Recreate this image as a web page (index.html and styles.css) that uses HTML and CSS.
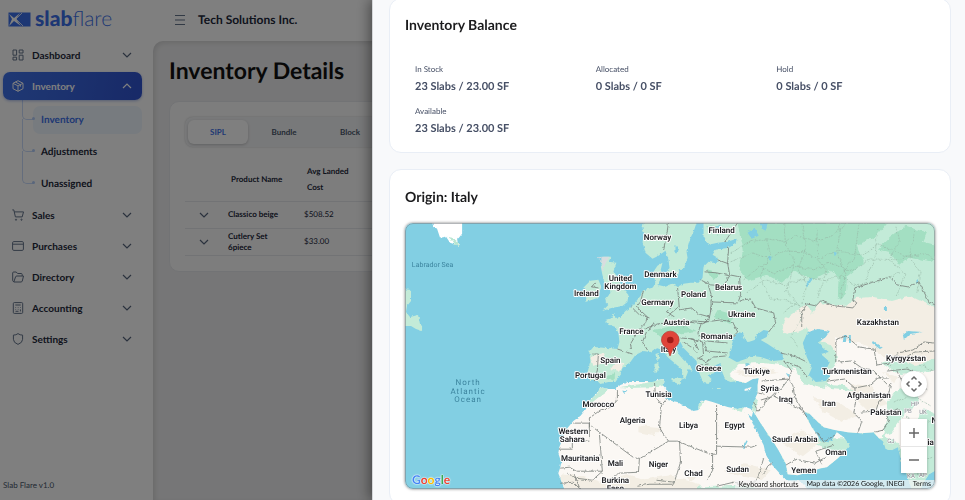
FILE: index.html
```html
<!DOCTYPE html>
<html lang="en">
<head>
<meta charset="utf-8">
<meta name="viewport" content="width=device-width, initial-scale=1">
<title>Slab Flare - Inventory Details</title>
<link rel="stylesheet" href="styles.css">
</head>
<body>
<svg class="defs" aria-hidden="true">
  <symbol id="down" viewBox="0 0 10 10"><path d="M1 3l4 4 4-4"/></symbol>
  <symbol id="up" viewBox="0 0 10 10"><path d="M1 7l4-4 4 4"/></symbol>
</svg>
<div class="app">
  <aside class="sidebar">
    <a class="logo" href="#">
      <svg width="23" height="15" viewBox="0 0 23 15" aria-hidden="true">
        <rect x="0.5" y="0.5" width="22" height="14" fill="#3b6fe8"/>
        <path d="M1 2l5 4 6-5-4 6 5 7-7-5-5 5 3-7z" fill="#fff"/>
        <path d="M8 7L14 1M8 7l7 7" stroke="#fff" stroke-width="0.8"/>
      </svg>
      <span class="wordmark"><b>slab</b>flare</span>
    </a>
    <nav class="nav">
      <button class="item"><svg class="icon" viewBox="0 0 12 12"><path d="M1 1h3.600v5.200H1zM7.200 1h3.800v3H7.200zM1 8.200h3.600V11H1zM7.200 6.200h3.800V11H7.200z"/></svg><span>Dashboard</span><svg class="chev"><use href="#down"/></svg></button>
      <button class="item active"><svg class="icon" viewBox="0 0 12 12"><path d="M6 .7l5 2.600v5.400L6 11.300 1 8.700V3.300zM1 3.300l5 2.600 5-2.600M6 5.900v5.400M3.400 2l5 2.700v2"/></svg><span>Inventory</span><svg class="chev"><use href="#up"/></svg></button>
      <ul class="submenu">
        <li><a class="current" href="#">Inventory</a></li>
        <li><a href="#">Adjustments</a></li>
        <li><a href="#">Unassigned</a></li>
      </ul>
      <button class="item"><svg class="icon" viewBox="0 0 12 12"><path d="M.3.9h1.500l1.600 7h6.800l1.300-5H2.300"/><circle cx="4" cy="10.700" r=".6"/><circle cx="9.500" cy="10.700" r=".6"/></svg><span>Sales</span><svg class="chev"><use href="#down"/></svg></button>
      <button class="item"><svg class="icon" viewBox="0 0 12 12"><rect x=".6" y="1.600" width="10.800" height="8.800" rx="1.200"/><path d="M.6 4.200h10.800"/></svg><span>Purchases</span><svg class="chev"><use href="#down"/></svg></button>
      <button class="item"><svg class="icon" viewBox="0 0 12 12"><path d="M1.800 11L.7 9.700V2q0-1 1-1h2.500l1.400 1.500h3.600q1 0 1 1v1.500M1.800 11l1.700-5q.3-1 1.300-1h6.700l-1.200 5q-.3 1-1.300 1z"/></svg><span>Directory</span><svg class="chev"><use href="#down"/></svg></button>
      <button class="item"><svg class="icon" viewBox="0 0 12 12"><rect x="1.300" y=".6" width="9.400" height="10.800" rx="1"/><path d="M3.300 3h5.400M3.500 5.500h.6M5.800 5.500h.6M8 5.500h.6M3.500 7.400h.6M5.800 7.400h.6M3.500 9.300h3M8.400 7.400v2"/></svg><span>Accounting</span><svg class="chev"><use href="#down"/></svg></button>
      <button class="item"><svg class="icon" viewBox="0 0 12 12"><path d="M6 .6q2 1.600 4.600 1.500v4.200q0 3.400-4.600 5.100-4.600-1.700-4.600-5.100V2.100Q4 2.200 6 .6z"/></svg><span>Settings</span><svg class="chev"><use href="#down"/></svg></button>
    </nav>
    <p class="version">Slab Flare v1.0</p>
  </aside>
  <div class="workspace">
    <header class="topbar">
      <button class="menu" aria-label="Toggle menu"><svg width="12" height="12" viewBox="0 0 12 12"><path d="M1 1.500h10M1 6h10M1 10.500h10"/></svg></button>
      <strong>Tech Solutions Inc.</strong>
    </header>
    <main class="page">
      <h1>Inventory Details</h1>
      <section class="panel">
        <div class="tabs"><button class="selected">SIPL</button><button>Bundle</button><button>Block</button></div>
        <table>
          <thead><tr><th class="toggle"></th><th class="name">Product Name</th><th>Avg Landed<br>Cost</th></tr></thead>
          <tbody>
            <tr><td class="toggle"><button aria-label="Expand"><svg class="chev"><use href="#down"/></svg></button></td><td class="name">Classico beige</td><td>$508.52</td></tr>
            <tr><td class="toggle"><button aria-label="Expand"><svg class="chev"><use href="#down"/></svg></button></td><td class="name">Cutlery Set<br>6piece</td><td>$33.00</td></tr>
          </tbody>
        </table>
      </section>
    </main>
  </div>
</div>
<div class="backdrop"></div>
<aside class="drawer">
  <section class="card">
    <h2>Inventory Balance</h2>
    <dl class="stats">
      <div><dt>In Stock</dt><dd>23 Slabs / 23.00 SF</dd></div>
      <div><dt>Allocated</dt><dd>0 Slabs / 0 SF</dd></div>
      <div><dt>Hold</dt><dd>0 Slabs / 0 SF</dd></div>
      <div><dt>Available</dt><dd>23 Slabs / 23.00 SF</dd></div>
    </dl>
  </section>
  <section class="card origin">
    <h2>Origin: Italy</h2>
    <div class="map">
      <svg class="world" viewBox="405 223 529 266" preserveAspectRatio="xMidYMid slice" role="img" aria-label="Map centred on Italy">
        <defs>
          <path id="eurasia" d="M703 220V238L708 245 717 243 727 242 736 239 735 244 728 248 715 250 712 255 717 258 717 263 712 263 708 262 703 267 702 278 698 283 690 283 683 284 677 287 672 284 665 287 657 285 662 276 660 271 662 263 657 266 653 272 655 284 652 288 643 290 640 296 635 302 631 307 625 311 620 317 615 318 614 314 611 318 605 320 607 324 615 327 618 333 619 342 617 349 607 348 593 347 589 352 590 362 587 373 590 381 597 381 600 384 608 382 615 382 620 375 622 368 630 362 635 355 643 351 650 352 656 348 662 350 667 357 674 363 680 368 683 376 680 380 685 378 687 373 688 369 692 371 690 366 683 360 678 354 675 347 680 342 683 348 690 355 696 361 697 369 700 376 703 383 708 384 711 379 707 375 714 373 711 367 720 363 722 373 725 380 730 382 737 381 745 383 752 379 758 378 757 385 757 393 753 402 751 409 755 415 760 423 766 432 773 442 779 452 785 463 787 474 797 475 811 471 820 468 826 467 837 458 843 452 849 445 843 437 836 432 833 437 828 442 820 441 816 434 811 427 806 418 803 412 808 413 813 418 823 427 835 430 847 432 860 433 873 432 878 438 882 441 885 449 891 450 897 447 900 460 905 473 909 484 912 493 919 491 922 483 928 474 940 467V220z"/>
          <path id="africa" d="M600 387L597 393 590 400 585 410 580 416 573 421 567 428 563 437 559 447 558 453 561 462 560 467 558 473 560 478 562 483 566 495H812L800 481 787 481 778 472 770 463 765 454 763 445 758 435 753 425 747 414 751 417 753 410 745 407 737 409 727 407 718 404 712 402 705 400 698 404 698 410 693 411 685 407 677 402 667 400 663 395 666 389 662 385 664 382 663 379 657 380 652 382 640 382 628 382 620 385 615 389 608 389z"/>
          <path id="nordic" d="M644 220L642 228 644 235 642 242 645 253 652 259 658 256 665 251 668 260 669 268 667 273 670 278 677 276 679 271 684 267 687 258 686 252 688 245 690 238 693 232 697 220z"/>
          <clipPath id="land"><use href="#eurasia"/></clipPath>
          <clipPath id="afclip"><use href="#africa"/></clipPath>
          <filter id="rough" x="0" y="0" width="100%" height="100%"><feTurbulence type="fractalNoise" baseFrequency=".16" numOctaves="2" seed="4"/><feDisplacementMap in="SourceGraphic" scale="5" xChannelSelector="R" yChannelSelector="G"/></filter>
          <filter id="coast"><feTurbulence type="fractalNoise" baseFrequency=".3" numOctaves="2" seed="8"/><feDisplacementMap in="SourceGraphic" scale="3" xChannelSelector="R" yChannelSelector="G"/></filter>
        </defs>
        <rect class="sea" x="405" y="223" width="529" height="266"/>
        <g filter="url(#coast)">
          <use class="green" href="#eurasia"/>
          <use class="sand" href="#africa"/>
          <use class="green" href="#nordic"/>
          <path class="green" d="M603 257L611 257 608 262 616 263 613 272 618 278 622 288 628 295 627 302 622 306 611 308 602 311 608 305 604 301 610 293 609 285 604 282 602 275 600 265zM590 281L598 280 601 287 597 298 585 302 587 295 584 287zM402 289L411 290 411 301 407 306 406 312 410 317 418 315 420 324 422 326 422 331 416 329 411 326 402 326zM655 354l3-1 1 6-3 1zM654 364l4-1v9l-4 1zM671 379l10-1-1 7-9-4zM712 388h8v1h-8z"/>
          <path fill="#fff" d="M431 219L433 226 437 229 440 238 446 237 450 243 459 246 458 239 462 234 462 219z"/>
          <path fill="#b9e6d2" d="M447 237l5 3 3 5 4 1-1-4-6-4z"/>
          <path class="sand" d="M744 389l7-2-2 3-5 1z"/>
          <path fill="#d8dddf" d="M601 257h8l-4 7-3 8-1-9zM597 258l3-1-1 3z"/>
        </g>
        <g clip-path="url(#land)">
          <g filter="url(#rough)">
            <path class="dark" d="M737 223h150l-12 14-18 8 6 18-21 17-12-9-17 9-20-8-12 11-15-8-19 6-8-10 3-20z"/>
            <path class="dark" d="M890 237l15-11 21 7-4 9 16 4-7 16-22-5-11 9-9-14-12-2zM838 271l8 7-1 17-8 4zM705 225l17 2-5 8zM717 310l17 5-4 8-17-6zM706 270l13 4-7 6zM652 330l31-6 13 7-20 3-10 8zM605 377l10-4-1 8z"/>
            <path class="beige" d="M803 323l16-20 26 3 10-8 18-1 18 4 18-5 30 14v50l-26 8-21 8-30-17-17 6-16-21-18-7z"/>
            <path class="sand" d="M728 375l10-11 22-1 18 1 17 4 7 15 22 5 12-28-2-23 34 9 18 13 16-2 8 12 20-3 18 16v37l-25-10-14 20 9 18-14 5-11-14H800l53 23-43 40h-30l-34-76 12-24z"/>
            <path class="beige" d="M785 319l20-14 6 7-8 18-18 5-4-8zM812 397l27 6 18 12-16 7-18-10zM850 384l20 2 16 18-20 7-15-15zM778 440l24-10 18 12-18 14zM590 357l13-4 4 8-14 6zM615 363l8 1-4 8-9-3zM733 372l28-6 16 6-29 5zM882 372l15 5-3 7z"/>
            <path class="green" d="M885 403l9-12 11-3 8-20 5 35-13 9-14 20-7 3 7 12-5 4-4-15 4-16zM903 430l20-8 12 6v48l-15 12-13-16zM809 377l19 7 16 1 9 6-23-2zM880 363l19-5 16 8 20-8v12l-35 5zM758 362l21 3 14 5-6-18-14-5zM785 339l16 9 6 14-19-7zM751 404l5-3-1 13z"/>
          </g>
        </g>
        <g clip-path="url(#afclip)"><g filter="url(#rough)">
          <path class="green" d="M599 386l9 4-12 9-14 12 8-12zM619 387l22-3 22-5 5 5-11 3-27 1zM557 479l22 2 22 2 28-3 21 5 28-2 26 4 43-2 20 8v10H557zM692 407l7-8 5 4-6 7zM731 409l14-4-3 8z"/>
          <path class="beige" d="M561 474l22 2 18 6 25-8 18 5 25-4 30 9-5 7H557zM638 425l24 2-8 8-16-3zM722 472l22-9 26 7-9 10zM683 472l16 2-8 7z"/>
        </g></g>
        <g class="sea" filter="url(#coast)">
          <path d="M729 352L732 342 733 337 738 332 744 334 742 338 748 342 754 340 757 334 763 330 768 331 766 337 760 340 767 344 776 350 782 354 782 360 772 361 760 357 752 356 745 359 736 362 729 358z"/>
          <path d="M802 343L807 332 817 329 829 331 825 337 818 342 823 348 828 352 820 354 829 362 826 368 829 376 825 381 815 382 808 375 811 368 806 357z"/>
          <path d="M902 335l5-4 15 1-13 2-6 6zM843 335h3l-1 7h-3zM848 335h2v8h-2zM872 341l9 7-2 1-8-6zM883 307h3v3h-3zM715 228l4-3 3 3-4 2zM747 233l7-5 4 8-7 3zM759 223h8l-2 8-4-2zM768 256l3 1-1 4-3-2zM833 252l3 1-2 5zM805 285l5-7 2 1-6 9zM914 281l4-2-2 5zM675 245l3 5-3 5zM785 373l5 2-3 1zM622 391l5-1-3 4zM742 447l4-7 1 1-4 8zM884 355h5l-3 2zM745 363l5 1-5 2z"/>
        </g>
        <g class="regions" filter="url(#rough)">
          <path d="M730 253l20-11 16-3 20 3 8-7 19 7 18-6 15-13M730 262l22-9 16 6 15-8 20 1 13 8 19-9 26 4 16-10 30 12 18-3 19 12M743 280l16-13 15 7 17-8 22 4 16-7 22 8 20-12 26 1 14-6M746 293l19-13 19 5 23-7 19 3 13-5 16 10 23-5 20-8M766 239l4 16-11 20 10 24M784 224l2 22 8 17-8 28 11 13M801 223l4 26-8 21 9 13-4 22M816 229l1 31 9 11-10 26M839 223l-2 32 8 19-6 25M858 225l-4 31-16 22M877 229l-3 28-9 23M895 226l4 16-11 18 17 14-10 22M914 231l-6 26 11 15-2 22M770 299l18 2 16 8M783 312l14-9 4 16-11 18 8 10M893 403l17-9 20 12M905 417l15 7 14-6M906 440l24 5M912 463l20-6M918 365l16 6M912 425l4 52"/>
        </g>
        <g class="borders" filter="url(#coast)">
          <path d="M737 223l-10 15-3 4M668 223l-2 13-3 14M728 248l-1 15 2 12 10 2 1 18-2 6M717 260l11 4M704 272l12 1 13 3M700 280l10 5 13 1 6-10M708 286l3 10-1 16M677 287l2 23M710 302l27 1 5-3 8-1 5 9 18 5 2 10-7 9M712 303l-4 18-5 2M679 310l12-2 7 6 11 3-6 7-16-2M667 316l11-9M643 291l-3 11-4 5 11 10-2 6-6 6-9 15 1 5M631 307l7 7 11 4M644 329l13-5 16-2 12 2M646 332l-4 10 5 8M654 322l-6 9M683 327l9-6 14 1 14-2 12 2 5 10-4 4M701 323l-4 11 8 7 22 2M680 338l13 1 5 11M690 339l12 3 1 13-6 4M683 342l9 6 5 5M704 342l2 9 21 2M697 358l9 4 7-5 12-1M700 365l8-1M617 349l15 5M593 354h5l-1 16-3 11M595 283l-4 4 7 1M672 305l-6 7 8 5"/>
          <path d="M801 327v-14l5-9 9 2 5-5 14 5 18 2 4-5-4-3 2-12 19-6 16-5 7 8 11 2 11-5 10 20 6 3M835 362v-22l10-4 13 11 15 2 3 16 13-2 7-10 16-3 11-8 10 1M837 362l14-1 10 7 11 2 15 15M890 366l4-10 11 1 9-5 20-1M886 371l20-2 12 5-1 8M780 353l16 4 10 5M783 361l16 6 8 11M783 361l8 10-3 8M761 381l14-1 13-1 4 6 2 12 12 20M788 379l-7 9-8 8 12 6 13 6 6 4M760 400l10-3 9-9M753 402l4 9 6-5 3 -8M757 393l6 1M816 432l7 10 11-7M763 474l4-8 5-4M785 465l10-6 19 4 11-6M821 464l-6-13 18-6M826 381l18-2 10 9 1 12-2 13 8 8-4 12M854 388l15-3 8-7 11 0M860 412l15-1 3-10 9-5 3-13M896 371l6 12 9 5M874 432l8-2 6-8-3-9 14-5M914 373l12 17"/>
          <path d="M617 390v10l-6 7-11 3-11 8v9M573 423h16v14M558 449h14v-8h17M591 426l43 32h5M599 433l3 38h-26l-7-4-9 1M654 382l1 14 6 9-2 23 9 13-28 17M661 405l5-6M716 405v41l35 1 5-2M716 446v8h-4v16l-5 10M668 441l9 0 35 14M679 441l1 21-3 10-4 12M639 458l-1 14-20 1-10 9M673 484l-24 0-12 2M602 471l-10 9-16-2-9-5M763 458l-6 20-11 10M560 483l13-1 7 7M716 486l17-4 18 3M656 480l18 2M574 474l5 13"/>
        </g>
        <g class="water">
          <text x="432.500" y="267">Labrador Sea</text>
          <g class="ocean"><text x="468" y="385">North</text><text x="468" y="393.500">Atlantic</text><text x="468" y="402">Ocean</text></g>
        </g>
        <g class="states"><text x="914" y="406">HP</text><text x="907" y="413">PB</text><text x="922" y="414">UK</text><text x="890" y="443">GJ</text><text x="910" y="478">KA</text><text x="922" y="477">AP</text></g>
        <g class="countries">
          <text x="657" y="240">Norway</text><text x="721" y="233">Finland</text><text x="620" y="281">United</text><text x="620" y="289">Kingdom</text><text x="586" y="296">Ireland</text><text x="660" y="277">Denmark</text><text x="657" y="305">Germany</text><text x="693" y="297">Poland</text><text x="728" y="290">Belarus</text><text x="741" y="317">Ukraine</text><text x="676" y="325">Austria</text><text x="631" y="334">France</text><text x="716" y="339">Romania</text><text x="877" y="325">Kazakhstan</text><text x="610" y="363">Spain</text><text x="590" y="378">Portugal</text><text x="668" y="352">Italy</text><text x="708" y="371">Greece</text><text x="756" y="374">Türkiye</text><text x="769" y="391">Syria</text><text x="785" y="402">Iraq</text><text x="658" y="397">Tunisia</text><text x="598" y="407">Morocco</text><text x="632" y="423">Algeria</text><text x="688" y="428">Libya</text><text x="734" y="428">Egypt</text><text x="573" y="434">Western</text><text x="572" y="442">Sahara</text><text x="580" y="461">Mauritania</text><text x="615" y="466">Mali</text><text x="658" y="467">Niger</text><text x="615" y="483">Burkina</text><text x="615" y="491">Faso</text><text x="693" y="476">Chad</text><text x="737" y="472">Sudan</text><text x="794" y="442">Saudi Arabia</text><text x="803" y="473">Yemen</text><text x="835" y="455">Oman</text><text x="828" y="406">Iran</text><text x="868" y="398">Afghanistan</text><text x="885" y="415">Pakistan</text><text x="846" y="374">Turkmenistan</text><text x="905" y="361">Kyrgyzstan</text><text x="941" y="423">Nepal</text><text x="924" y="445">India</text>
        </g>
        <g><path d="M669.500 356L667 348.500Q661 345 661 340a8.800 8.800 0 0117.600 0q0 5-6 8.500z" fill="#e0453a" stroke="#b83a30" stroke-width=".7"/><circle cx="669.800" cy="340" r="3.300" fill="#a11a16"/></g>
      </svg>
      <div class="google" aria-label="Google"><span>G</span><span>o</span><span>o</span><span>g</span><span>l</span><span>e</span></div>
      <div class="controls">
        <button class="pan" aria-label="Map camera controls"><svg width="18" height="18" viewBox="0 0 18 18"><path d="M6.500 4.500L9 2l2.500 2.500M6.500 13.500L9 16l2.500-2.500M4.500 6.500L2 9l2.500 2.500M13.500 6.500L16 9l-2.500 2.500"/></svg></button>
        <div class="zoom"><button aria-label="Zoom in"><svg width="12" height="12" viewBox="0 0 12 12"><path d="M1 6h10M6 1v10"/></svg></button><button aria-label="Zoom out"><svg width="12" height="12" viewBox="0 0 12 12"><path d="M1 6h10"/></svg></button></div>
      </div>
      <div class="legal"><button>Keyboard shortcuts</button><span>Map data ©2026 Google, INEGI</span><a href="#">Terms</a></div>
    </div>
  </section>
</aside>
</body>
</html>
```
FILE: styles.css
```css
* { box-sizing: border-box; }
body {
  margin: 0;
  height: 100vh;
  overflow: hidden;
  background: #fff;
  color: #1e293b;
  font-family: Lato, "Liberation Sans", sans-serif;
  font-size: 12px;
  text-rendering: geometricPrecision;
}
button { border: 0; padding: 0; background: none; color: inherit; font: inherit; }
a { color: inherit; text-decoration: none; }
h1, h2, p, ul, dl, dd { margin: 0; padding: 0; }
svg { display: block; flex: none; }
.defs { position: absolute; width: 0; height: 0; }

.app { display: flex; height: 100vh; isolation: isolate; }
.sidebar { display: flex; flex-direction: column; width: 153px; padding: 0 11px 0 3px; }
.logo { display: flex; align-items: center; gap: 4px; height: 38px; padding-left: 5px; color: #3b6fe8; }
.wordmark { font-size: 21px; line-height: 24px; font-weight: 300; }
.wordmark b { font-weight: 900; }
.nav { display: flex; flex-direction: column; gap: 3px; margin-top: 3px; font-size: 10px; }
.item { display: flex; align-items: center; gap: 8px; height: 28px; padding: 0 10px 0 9px; border-radius: 7px; font-weight: 700; text-align: left; }
.item span { flex: 1; }
.icon { width: 12px; height: 12px; fill: none; stroke: #64748b; stroke-width: 1; }
.chev { width: 10px; height: 10px; fill: none; stroke: #56657c; stroke-width: 1.2; }
.item.active { position: relative; z-index: 1; background: linear-gradient(100deg, #3f72e8, #3053cf); color: #fff; box-shadow: 0 1px 3px #3159c966; }
.item.active svg { stroke: #fff; }
.submenu { display: flex; flex-direction: column; gap: 4px; padding: 3px 0 0 30px; list-style: none; }
.submenu li { position: relative; }
.submenu a { display: block; padding: 0 8px; border-radius: 7px; line-height: 28px; font-weight: 700; }
.submenu .current { background: #eff6ff; color: #3f72e8; }
.submenu li::before { content: ""; position: absolute; left: -11px; top: -19px; width: 11px; height: 32px; border: solid #c8dafa; border-width: 0 0 1px 1px; border-bottom-left-radius: 5px; }
.submenu li::after { content: ""; position: absolute; left: -1px; top: 11px; width: 3px; height: 3px; border-radius: 50%; background: #b3cdf8; }
.version { margin-top: auto; padding-bottom: 7px; color: #475569; font-size: 8px; line-height: 16px; }

.workspace { display: flex; flex: 1; flex-direction: column; min-width: 0; }
.topbar { display: flex; align-items: center; gap: 12px; height: 39px; padding: 0 21px; font-size: 12px; }
.menu svg { fill: none; stroke: #64748b; stroke-width: 1.2; }
.page { flex: 1; margin-top: 2px; padding: 13px 16px; border-top-left-radius: 10px; background: #ededee; box-shadow: inset 2px 2px 5px #0000001c; }
h1 { color: #111; font-size: 23px; line-height: 32px; }
.panel { margin-top: 15px; padding: 15px; border: 1px solid #e5e7eb; border-radius: 10px; background: #fafafa; }
.tabs { display: flex; gap: 6px; padding: 3px; border-radius: 8px; background: #f1f2f4; box-shadow: 0 0 2px #0003; }
.tabs button { width: 60px; height: 24px; border-radius: 6px; color: #475569; font-size: 8px; font-weight: 700; }
.tabs .selected { background: #fff; color: #3f72e8; box-shadow: 0 1px 3px #0003; }
table { width: 100%; margin-top: 8px; border-collapse: collapse; font-size: 8px; }
th, td { border-bottom: 1px solid #e5e7eb; text-align: left; }
th { height: 46px; padding: 2px 9px 0; line-height: 16px; }
td { height: 27px; padding: 2px 6px; line-height: 11px; }
td.name { font-weight: 700; }
.toggle { width: 37px; }
.name { width: 76px; white-space: nowrap; }
.toggle button { display: block; margin-left: 8px; }

.backdrop { position: fixed; inset: 0; background: #00000080; }
.drawer { position: fixed; inset: 0 0 0 372px; overflow: hidden; padding: 0 14px 0 16px; border-left: 1px solid #d5d7da; background: #f8f9fb; box-shadow: -3px 0 12px #0006; }
.card { margin-top: -2px; padding: 14px 15px 13px; border: 1px solid #e9eef6; border-radius: 12px; background: #fff; }
.card.origin { margin-top: 16px; padding: 15px; }
h2 { color: #1c1c1e; font-size: 14px; line-height: 24px; }
.stats { display: grid; grid-template-columns: repeat(3, 1fr); gap: 7px 32px; padding: 25px 10px 0; color: #475066; }
dt { font-size: 8px; line-height: 14px; }
dd { margin-top: 1px; font-size: 11px; line-height: 20px; font-weight: 700; }

.map { position: relative; height: 266px; margin-top: 14px; overflow: hidden; border-radius: 8px; box-shadow: 0 0 3px #0008; }
.world { width: 100%; height: 100%; }
.map::after { content: ""; position: absolute; inset: 0; border: 1px solid #80868b99; border-radius: 8px; pointer-events: none; }
.sea { fill: #82cfe3; }
.green { fill: #c3ebd8; }
.dark { fill: #a3dfc2; }
.beige { fill: #f3eee4; }
.sand { fill: #fbf8f4; }
.borders { fill: none; stroke: #777d79; stroke-width: 0.8; }
.regions { fill: none; stroke: #95b5a5; stroke-width: 0.6; stroke-dasharray: 2 1; }
.world text { font-family: Roboto, sans-serif; text-anchor: middle; }
.countries { fill: #202124; stroke: #fff; stroke-width: 2px; stroke-linejoin: round; paint-order: stroke; font-size: 8px; font-weight: 600; }
.water { fill: #3c849e; font-size: 7px; }
.ocean { font-size: 8px; letter-spacing: 1px; }
.states { fill: #80868b; stroke: #fff; stroke-width: 1px; paint-order: stroke; font-size: 6px; }
.google { position: absolute; left: 7px; bottom: 1px; font-size: 12px; line-height: 16px; font-weight: 700; text-shadow: 0 0 1px #fff, 0 0 1px #fff, 0 0 2px #fff; color: #4285f4; }
.google span:nth-child(2), .google span:nth-child(6) { color: #ea4335; }
.google span:nth-child(3) { color: #fbbc04; }
.google span:nth-child(5) { color: #34a853; }
.controls { position: absolute; right: 8px; bottom: 16px; display: flex; flex-direction: column; gap: 22px; }
.controls button { display: flex; align-items: center; justify-content: center; width: 26px; height: 27px; background: #fff; }
.controls svg { fill: none; stroke: #666; stroke-width: 1.5; }
.controls .pan { height: 26px; border-radius: 50%; box-shadow: 0 1px 3px #0004; }
.zoom { box-shadow: 0 1px 3px #0004; }
.zoom button + button { border-top: 1px solid #e6e6e6; }
.legal { position: absolute; right: 0; bottom: 0; display: flex; gap: 8px; padding: 0 4px; background: #f5f5f5b3; color: #111; font-size: 7px; line-height: 9px; }
```
